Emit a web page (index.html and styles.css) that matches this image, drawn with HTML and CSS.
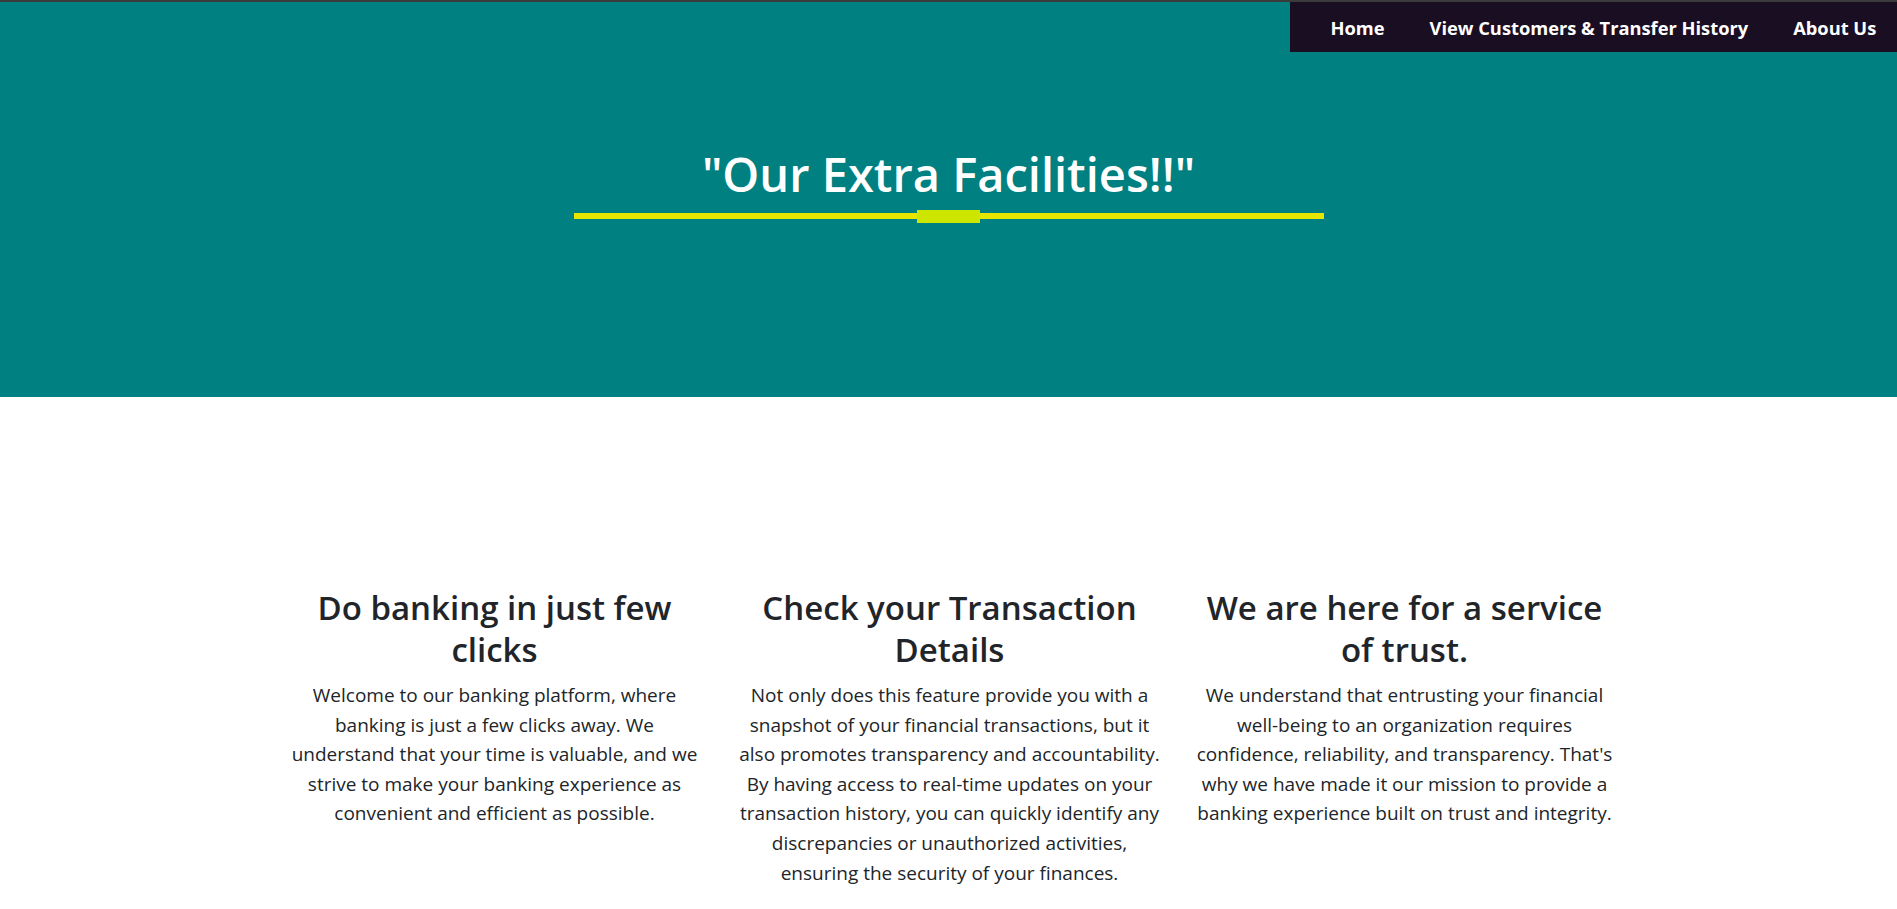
FILE: index.html
```html
<!DOCTYPE html>
<html lang="en">
<head>
<meta charset="utf-8">
<title>Our Extra Facilities</title>
<link rel="stylesheet" href="styles.css">
</head>
<body>
<div class="topstrip"></div>
<header class="hero">
  <nav class="nav">
    <a class="nav-link" href="#">Home</a>
    <a class="nav-link" href="#">View Customers &amp; Transfer History</a>
    <a class="nav-link" href="#">About Us</a>
  </nav>
  <div class="hero-body">
    <h1 class="hero-title">"Our Extra Facilities!!"</h1>
    <div class="underline"><span class="underline-mark"></span></div>
  </div>
</header>
<main class="features">
  <section class="feature">
    <h2 class="feature-title">Do banking in just few clicks</h2>
    <p class="feature-text">Welcome to our banking platform, where banking is just a few clicks away. We understand that your time is valuable, and we strive to make your banking experience as convenient and efficient as possible.</p>
  </section>
  <section class="feature">
    <h2 class="feature-title">Check your Transaction Details</h2>
    <p class="feature-text">Not only does this feature provide you with a snapshot of your financial transactions, but it also promotes transparency and accountability. By having access to real-time updates on your transaction history, you can quickly identify any discrepancies or unauthorized activities, ensuring the security of your finances.</p>
  </section>
  <section class="feature">
    <h2 class="feature-title">We are here for a service of trust.</h2>
    <p class="feature-text">We understand that entrusting your financial well-being to an organization requires confidence, reliability, and transparency. That's why we have made it our mission to provide a banking experience built on trust and integrity.</p>
  </section>
</main>
</body>
</html>
```

FILE: styles.css
```css
* { box-sizing: border-box; }
html, body { margin: 0; padding: 0; }
body {
  font-family: "Open Sans", "Noto Sans", "DejaVu Sans", sans-serif;
  color: #212529;
  background: #fff;
}
.topstrip {
  height: 2px;
  background: #3b3b3b;
}
.hero {
  background: #008080;
  height: 395px;
  display: flex;
  flex-direction: column;
}
.nav {
  align-self: flex-end;
  display: flex;
  align-items: center;
  height: 50px;
  width: 607px;
  padding-left: 18px;
  background: #1a0e23;
}
.nav-link {
  color: #fff;
  text-decoration: none;
  font-weight: 700;
  font-size: 18.3px;
  padding: 0 22.5px;
  white-space: nowrap;
}
.hero-body {
  display: flex;
  flex-direction: column;
  align-items: center;
  padding-top: 92px;
}
.hero-title {
  margin: 0;
  color: #fff;
  font-weight: 600;
  font-size: 47px;
  line-height: 60px;
}
.underline {
  margin-top: 9px;
  width: 750px;
  height: 6px;
  background: #e6e600;
  display: flex;
  justify-content: center;
  align-items: center;
}
.underline-mark {
  width: 63px;
  height: 13px;
  background: #cde600;
}
.features {
  display: flex;
  justify-content: center;
  padding-top: 190px;
  padding-left: 2px;
}
.feature {
  width: 455px;
  padding: 0 16px;
  text-align: center;
}
.feature-title {
  margin: 0 0 10px;
  font-size: 33px;
  font-weight: 600;
  line-height: 42px;
}
.feature-text {
  margin: 0;
  font-size: 19px;
  line-height: 29.6px;
}
```
